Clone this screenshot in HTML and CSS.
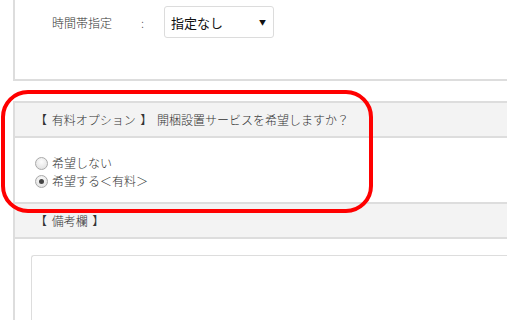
FILE: index.html
```html
<!DOCTYPE html>
<html lang="ja">
<head>
<meta charset="utf-8">
<link rel="stylesheet" href="styles.css">
</head>
<body>
<div class="page">
  <section class="box box-top">
    <div class="field-row">
      <span class="label">時間帯指定</span>
      <span class="colon">:</span>
      <div class="select">
        <span class="select-text">指定なし</span>
        <span class="select-arrow">▼</span>
      </div>
    </div>
  </section>

  <section class="box box-option">
    <div class="band">【 有料オプション 】 開梱設置サービスを希望しますか？</div>
    <div class="option-body">
      <label class="radio-row"><span class="radio"></span><span>希望しない</span></label>
      <label class="radio-row"><span class="radio checked"></span><span>希望する＜有料＞</span></label>
    </div>
  </section>

  <section class="box box-note">
    <div class="band">【 備考欄 】</div>
    <div class="note-body">
      <div class="textarea"></div>
    </div>
  </section>

  <div class="highlight"></div>
</div>
</body>
</html>
```

FILE: styles.css
```css
* { box-sizing: border-box; }
html, body {
  margin: 0;
  padding: 0;
  background: #fff;
  overflow: hidden;
}
body {
  font-family: "Noto Sans CJK JP", "Noto Sans", sans-serif;
  font-size: 12px;
  font-weight: 300;
  color: #333;
  width: 507px;
  height: 320px;
}
.page {
  position: relative;
  padding-left: 13px;
  width: 507px;
  height: 320px;
  overflow: hidden;
}
.box {
  border-left: 2px solid #dddddd;
}
.box-top {
  height: 81px;
  border-bottom: 2px solid #dddddd;
  padding-top: 6px;
}
.field-row {
  display: flex;
  align-items: center;
  padding-left: 37px;
}
.label {
  width: 89px;
  color: #333;
}
.colon {
  width: 23px;
  color: #333;
}
.select {
  display: flex;
  align-items: center;
  justify-content: space-between;
  width: 110px;
  height: 32px;
  border: 1px solid #dcdcdc;
  border-radius: 3px;
  padding: 0 7px 0 6px;
}
.select-text {
  font-size: 13px;
  font-weight: 400;
  color: #111;
}
.select-arrow {
  font-size: 7px;
  color: #111;
}
.box-option {
  margin-top: 20px;
}
.band {
  background: #f3f3f3;
  border-top: 2px solid #dddddd;
  border-bottom: 2px solid #dddddd;
  height: 37px;
  padding-left: 20px;
  display: flex;
  align-items: center;
  color: #333;
  word-spacing: 2px;
}
.option-body {
  height: 64px;
  padding-top: 17px;
  padding-left: 20px;
  display: flex;
  flex-direction: column;
  gap: 2px;
}
.radio-row {
  display: flex;
  align-items: center;
  gap: 4px;
  height: 16px;
  line-height: 16px;
  color: #333;
}
.radio {
  width: 13px;
  height: 13px;
  border-radius: 50%;
  border: 1px solid #a9a9a9;
  background: radial-gradient(circle at 50% 35%, #fdfdfd 0%, #e2e2e2 80%);
  display: inline-flex;
  align-items: center;
  justify-content: center;
}
.radio.checked::after {
  content: "";
  width: 5px;
  height: 5px;
  border-radius: 50%;
  background: #444;
}
.note-body {
  padding: 16px 0 0 16px;
  height: 90px;
}
.textarea {
  height: 74px;
  border: 1px solid #dddddd;
  border-right: none;
  border-bottom: none;
  border-top-left-radius: 3px;
}
.highlight {
  position: absolute;
  left: 1px;
  top: 90px;
  width: 372px;
  height: 123px;
  border: 4px solid #ff0000;
  border-radius: 27px;
  pointer-events: none;
}
```
